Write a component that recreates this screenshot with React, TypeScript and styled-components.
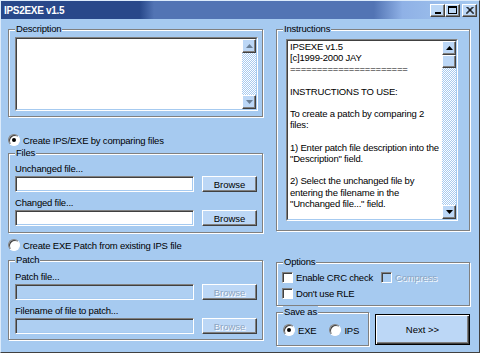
import React from 'react';
import styled, { createGlobalStyle } from 'styled-components';

const BG = '#a6caf0';
const FACE = '#bcd7f6';
const SHADOW = '#808080';
const DARK = '#404040';
const LIGHT = '#ffffff';

const GlobalStyle = createGlobalStyle`
  html, body {
    margin: 0;
    padding: 0;
    background: ${BG};
  }
  body {
    font-family: 'Liberation Sans', Arial, sans-serif;
    font-size: 9.5px;
    letter-spacing: -0.2px;
    color: #000;
  }
  * {
    box-sizing: border-box;
  }
`;

const Window = styled.div`
  width: 480px;
  height: 353px;
  display: flex;
  flex-direction: column;
  background: ${BG};
  border: 1px solid;
  border-color: #dcebfb ${DARK} ${DARK} #dcebfb;
  overflow: hidden;
`;

const TitleBar = styled.div`
  height: 18px;
  flex: none;
  display: flex;
  align-items: center;
  justify-content: space-between;
  padding: 0 2px 0 3px;
  background: linear-gradient(
    to right,
    #28488a 0%,
    #28488a 29%,
    #5274b4 32%,
    #5274b4 78%,
    #8fb1e6 84%,
    #a6caf0 100%
  );
`;

const Title = styled.span`
  color: #fff;
  font-weight: bold;
  font-size: 10px;
  letter-spacing: -0.3px;
`;

const Controls = styled.div`
  display: flex;
`;

const CtrlButton = styled.div<{ $gap?: number }>`
  width: 15px;
  height: 13px;
  margin-left: ${(p) => p.$gap || 0}px;
  display: flex;
  align-items: center;
  justify-content: center;
  background: ${FACE};
  border: 1px solid;
  border-color: ${LIGHT} ${DARK} ${DARK} ${LIGHT};
  box-shadow: inset -1px -1px 0 ${SHADOW};
`;

const Body = styled.div`
  flex: 1;
  display: flex;
  gap: 13px;
  padding: 4px 9px 0 7px;
`;

const Column = styled.div<{ $w: number }>`
  width: ${(p) => p.$w}px;
  flex: none;
  display: flex;
  flex-direction: column;
`;

const Group = styled.fieldset<{ $mt?: number; $w?: number }>`
  margin: ${(p) => p.$mt || 0}px 0 0 0;
  padding: 0;
  min-width: 0;
  width: ${(p) => (p.$w ? `${p.$w}px` : 'auto')};
  border: 1px solid ${SHADOW};
  box-shadow: inset 1px 1px 0 ${LIGHT}, 1px 1px 0 ${LIGHT};
`;

const Legend = styled.legend`
  margin-left: 6px;
  padding: 0 1px;
  height: 12px;
  line-height: 12px;
  background: ${BG};
  position: relative;
`;

const Inner = styled.div<{ $p: string; $gap?: number }>`
  padding: ${(p) => p.$p};
  display: flex;
  flex-direction: column;
  gap: ${(p) => p.$gap || 0}px;
`;

const SunkenOuter = styled.div<{ $w: number; $h: number }>`
  width: ${(p) => p.$w}px;
  height: ${(p) => p.$h}px;
  border: 1px solid;
  border-color: ${SHADOW} ${LIGHT} ${LIGHT} ${SHADOW};
  display: flex;
`;

const SunkenInner = styled.div`
  flex: 1;
  display: flex;
  background: #fff;
  border: 1px solid;
  border-color: ${DARK} ${BG} ${BG} ${DARK};
  min-width: 0;
`;

const TextArea = styled.div`
  flex: 1;
  min-width: 0;
  padding: 0 2px;
  white-space: pre;
  line-height: 11.2px;
  overflow: hidden;
`;

const ScrollBar = styled.div`
  width: 14px;
  flex: none;
  display: flex;
  flex-direction: column;
  background-color: ${BG};
  background-image: conic-gradient(#fff 0 25%, ${BG} 0 50%, #fff 0 75%, ${BG} 0);
  background-size: 2px 2px;
`;

const Raised = styled.div<{ $h: number }>`
  height: ${(p) => p.$h}px;
  flex: none;
  display: flex;
  align-items: center;
  justify-content: center;
  background: ${FACE};
  border: 1px solid;
  border-color: ${LIGHT} ${DARK} ${DARK} ${LIGHT};
  box-shadow: inset -1px -1px 0 ${SHADOW};
`;

const Track = styled.div`
  flex: 1;
`;

const RadioRow = styled.label<{ $mt?: number }>`
  height: 14px;
  margin-top: ${(p) => p.$mt || 0}px;
  display: flex;
  align-items: center;
  gap: 3px;
`;

const RadioDot = styled.span<{ $on?: boolean }>`
  width: 12px;
  height: 12px;
  flex: none;
  border-radius: 50%;
  background: #fff;
  border: 1px solid;
  border-color: ${SHADOW} ${LIGHT} ${LIGHT} ${SHADOW};
  box-shadow: inset 1px 1px 0 ${DARK};
  display: flex;
  align-items: center;
  justify-content: center;

  &::after {
    content: '';
    width: 4px;
    height: 4px;
    border-radius: 50%;
    background: #000;
    display: ${(p) => (p.$on ? 'block' : 'none')};
  }
`;

const CheckRow = styled.label<{ $disabled?: boolean }>`
  height: 13px;
  display: flex;
  align-items: center;
  gap: 3px;
  color: ${(p) => (p.$disabled ? '#8ba4c2' : '#000')};
  text-shadow: ${(p) => (p.$disabled ? '1px 1px 0 #fff' : 'none')};
`;

const CheckBox = styled.span<{ $disabled?: boolean }>`
  width: 11px;
  height: 11px;
  flex: none;
  background: ${(p) => (p.$disabled ? BG : '#fff')};
  border: 1px solid;
  border-color: ${SHADOW} ${LIGHT} ${LIGHT} ${SHADOW};
  box-shadow: inset 1px 1px 0 ${DARK};
`;

const FieldLabel = styled.div`
  height: 12px;
  line-height: 12px;
  margin-bottom: 1px;
`;

const Row = styled.div<{ $gap: number }>`
  display: flex;
  gap: ${(p) => p.$gap}px;
`;

const Field = styled.input`
  width: 179px;
  height: 16px;
  margin: 0;
  padding: 0 2px;
  font: inherit;
  background: #fff;
  border: 1px solid;
  border-color: ${SHADOW} ${LIGHT} ${LIGHT} ${SHADOW};
  box-shadow: inset 1px 1px 0 ${DARK}, inset -1px -1px 0 ${BG};
  outline: none;

  &:disabled {
    background: #aecff2;
  }
`;

const Button = styled.button`
  width: 55px;
  height: 16px;
  padding: 0;
  margin: 0;
  font: inherit;
  color: #000;
  background: ${FACE};
  border: 1px solid;
  border-color: ${LIGHT} ${DARK} ${DARK} ${LIGHT};
  box-shadow: inset -1px -1px 0 ${SHADOW};

  &:disabled {
    color: #8ba4c2;
    text-shadow: 1px 1px 0 #fff;
  }
`;

const BottomRow = styled.div`
  display: flex;
  gap: 6px;
  align-items: flex-start;
`;

const NextButton = styled.button`
  width: 95px;
  height: 31px;
  margin: 8px 0 0 0;
  padding: 0;
  font: inherit;
  color: #000;
  background: ${FACE};
  border: 1px solid #000;
  box-shadow: inset 1px 1px 0 ${LIGHT}, inset -1px -1px 0 ${DARK}, inset -2px -2px 0 ${SHADOW};
`;

const Arrow = ({ dir, color }: { dir: 'up' | 'down'; color: string }) => (
  <svg width="7" height="4" viewBox="0 0 7 4">
    {dir === 'up' ? (
      <polygon points="3.5,0 7,4 0,4" fill={color} />
    ) : (
      <polygon points="0,0 7,0 3.5,4" fill={color} />
    )}
  </svg>
);

const MinGlyph = () => (
  <svg width="8" height="7" viewBox="0 0 8 7">
    <rect x="1" y="5" width="6" height="2" fill="#000" />
  </svg>
);

const MaxGlyph = () => (
  <svg width="9" height="8" viewBox="0 0 9 8">
    <rect x="0.5" y="0.5" width="8" height="7" fill="none" stroke="#000" />
    <rect x="0" y="0" width="9" height="2" fill="#000" />
  </svg>
);

const CloseGlyph = () => (
  <svg width="8" height="7" viewBox="0 0 8 7">
    <path d="M0.5 0 L7.5 7 M1.5 0 L8 6.5 M7.5 0 L0.5 7 M6.5 0 L0 6.5" stroke="#000" strokeWidth="1" />
  </svg>
);

const instructions = `IPSEXE v1.5
[c]1999-2000 JAY
======================

INSTRUCTIONS TO USE:

To create a patch by comparing 2
files:

1) Enter patch file description into the
"Description" field.

2) Select the unchanged file by
entering the filename in the
"Unchanged file..." field.`;

const FileField = ({ label, disabled }: { label: string; disabled?: boolean }) => (
  <div>
    <FieldLabel>{label}</FieldLabel>
    <Row $gap={8}>
      <Field type="text" disabled={disabled} readOnly />
      <Button type="button" disabled={disabled}>
        Browse
      </Button>
    </Row>
  </div>
);

export default function App() {
  return (
    <>
      <GlobalStyle />
      <Window>
        <TitleBar>
          <Title>IPS2EXE v1.5</Title>
          <Controls>
            <CtrlButton>
              <MinGlyph />
            </CtrlButton>
            <CtrlButton>
              <MaxGlyph />
            </CtrlButton>
            <CtrlButton $gap={2}>
              <CloseGlyph />
            </CtrlButton>
          </Controls>
        </TitleBar>

        <Body>
          <Column $w={255}>
            <Group>
              <Legend>Description</Legend>
              <Inner $p="2px 4px 5px 6px">
                <SunkenOuter $w={243} $h={74}>
                  <SunkenInner>
                    <TextArea />
                    <ScrollBar>
                      <Raised $h={14}>
                        <Arrow dir="up" color="#6a7f96" />
                      </Raised>
                      <Track />
                      <Raised $h={14}>
                        <Arrow dir="down" color="#6a7f96" />
                      </Raised>
                    </ScrollBar>
                  </SunkenInner>
                </SunkenOuter>
              </Inner>
            </Group>

            <RadioRow $mt={16}>
              <RadioDot $on />
              Create IPS/EXE by comparing files
            </RadioRow>

            <Group>
              <Legend>Files</Legend>
              <Inner $p="4px 4px 6px 6px" $gap={5}>
                <FileField label="Unchanged file..." />
                <FileField label="Changed file..." />
              </Inner>
            </Group>

            <RadioRow $mt={5}>
              <RadioDot />
              Create EXE Patch from existing IPS file
            </RadioRow>

            <Group $mt={2}>
              <Legend>Patch</Legend>
              <Inner $p="5px 4px 5px 6px" $gap={5}>
                <FileField label="Patch file..." disabled />
                <FileField label="Filename of file to patch..." disabled />
              </Inner>
            </Group>
          </Column>

          <Column $w={194}>
            <Group>
              <Legend>Instructions</Legend>
              <Inner $p="4px 11px 9px 9px">
                <SunkenOuter $w={172} $h={182}>
                  <SunkenInner>
                    <TextArea>{instructions}</TextArea>
                    <ScrollBar>
                      <Raised $h={14}>
                        <Arrow dir="up" color="#000" />
                      </Raised>
                      <Raised $h={13} />
                      <Track />
                      <Raised $h={14}>
                        <Arrow dir="down" color="#000" />
                      </Raised>
                    </ScrollBar>
                  </SunkenInner>
                </SunkenOuter>
              </Inner>
            </Group>

            <Group $mt={25}>
              <Legend>Options</Legend>
              <Inner $p="3px 5px 5px 5px" $gap={3}>
                <Row $gap={8}>
                  <CheckRow>
                    <CheckBox />
                    Enable CRC check
                  </CheckRow>
                  <CheckRow $disabled>
                    <CheckBox $disabled />
                    Compress
                  </CheckRow>
                </Row>
                <CheckRow>
                  <CheckBox />
                  Don't use RLE
                </CheckRow>
              </Inner>
            </Group>

            <BottomRow>
              <Group $w={93}>
                <Legend>Save as</Legend>
                <Inner $p="5px 5px 8px 6px">
                  <Row $gap={13}>
                    <RadioRow>
                      <RadioDot $on />
                      EXE
                    </RadioRow>
                    <RadioRow>
                      <RadioDot />
                      IPS
                    </RadioRow>
                  </Row>
                </Inner>
              </Group>
              <NextButton type="button">Next &gt;&gt;</NextButton>
            </BottomRow>
          </Column>
        </Body>
      </Window>
    </>
  );
}
